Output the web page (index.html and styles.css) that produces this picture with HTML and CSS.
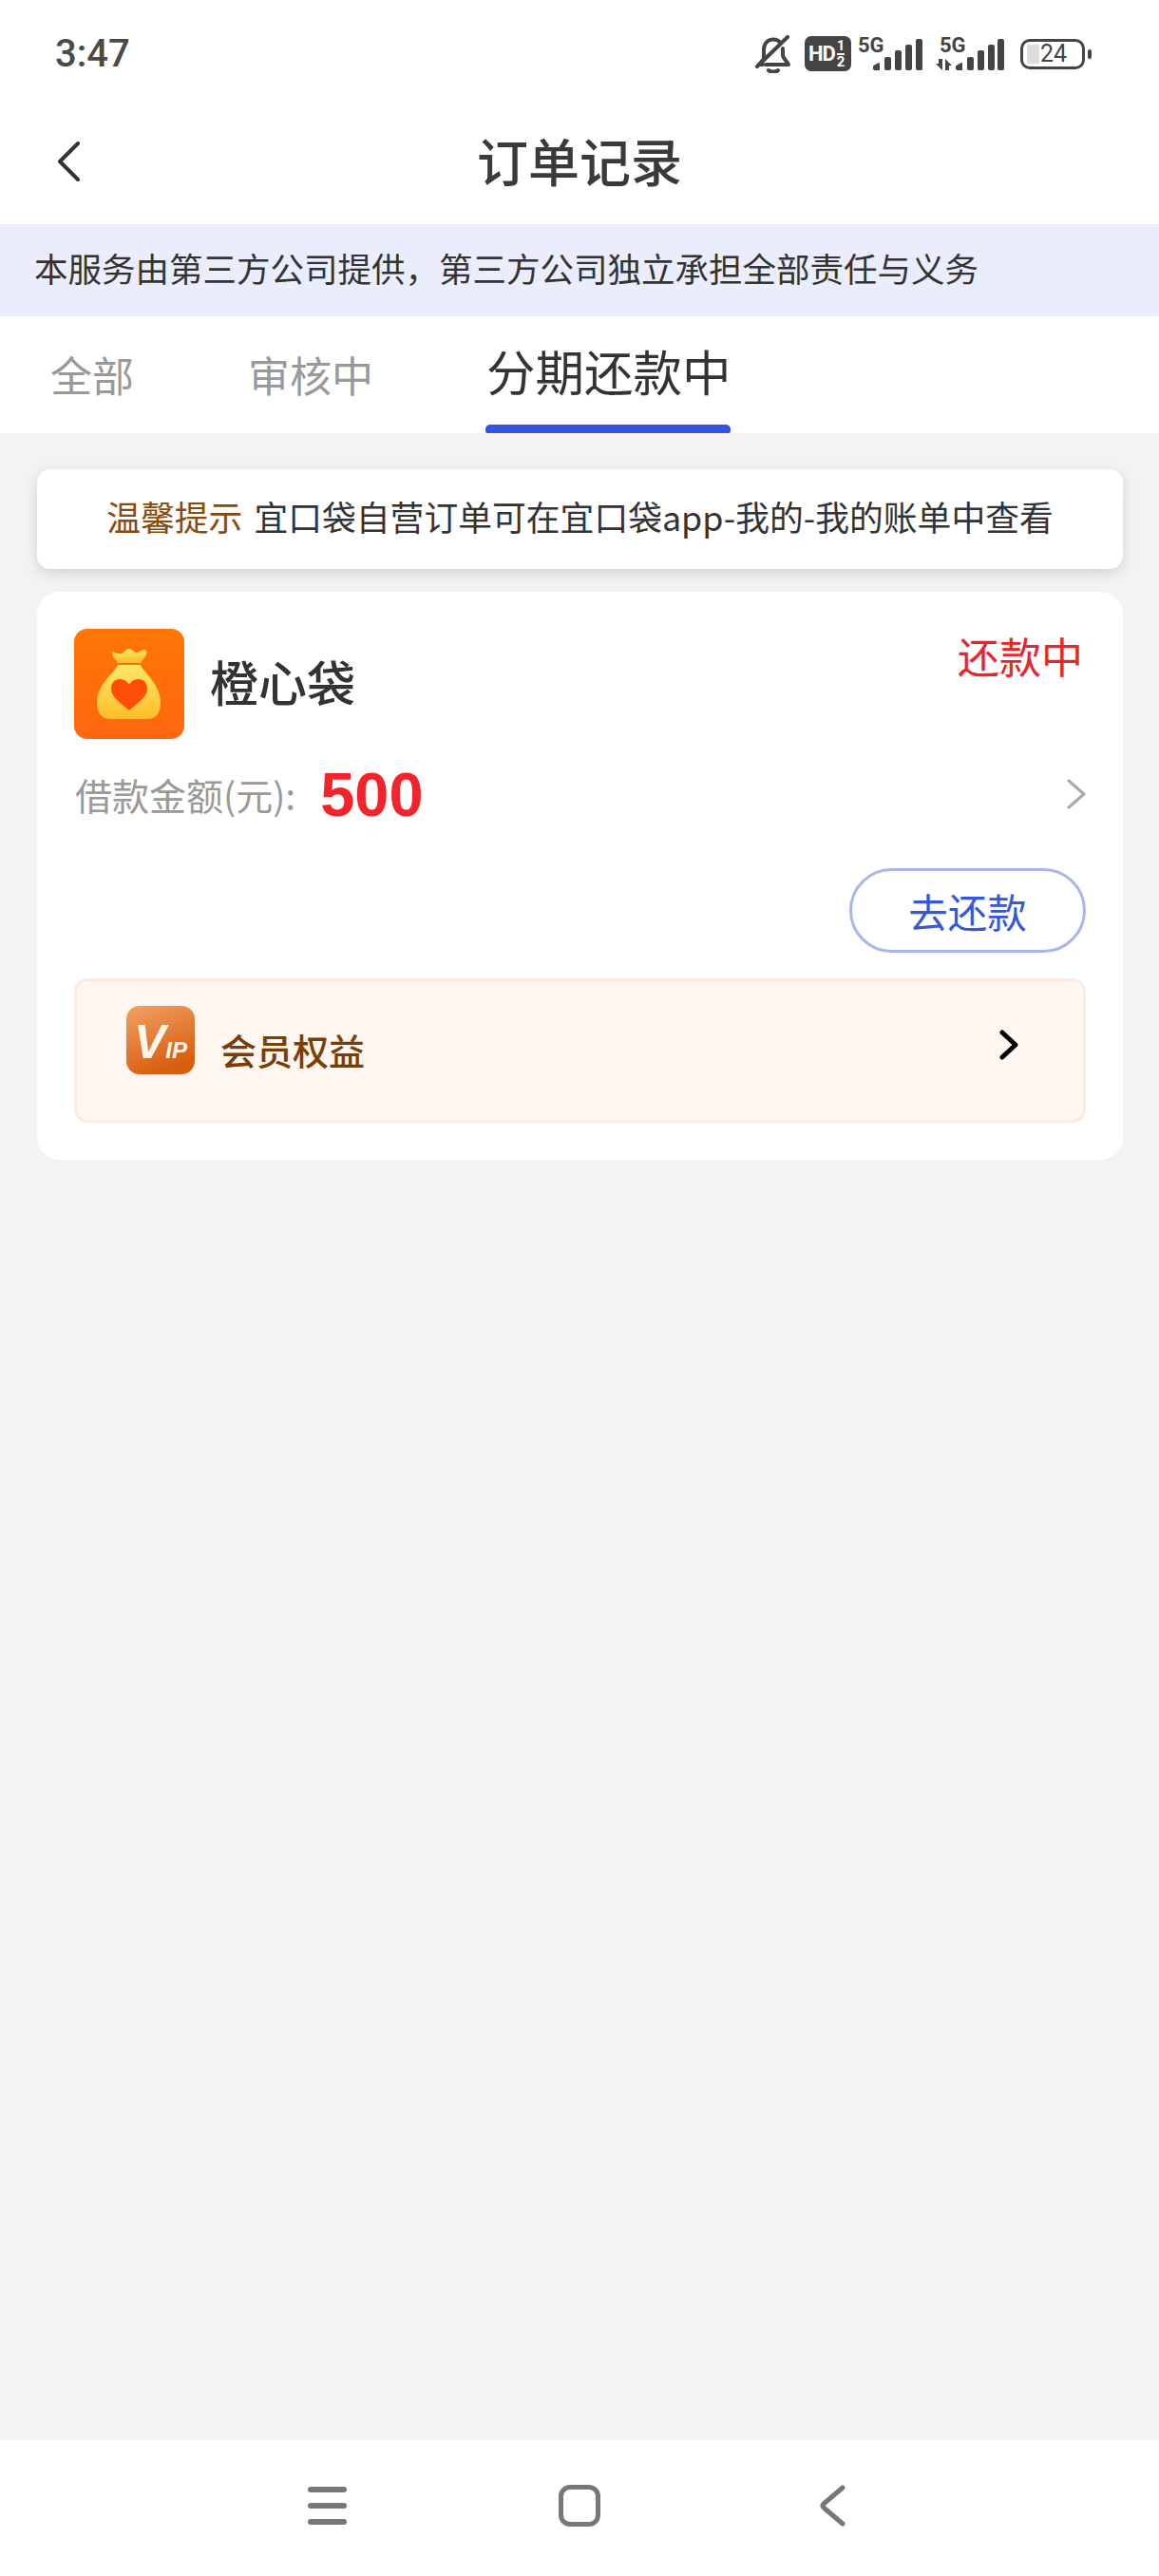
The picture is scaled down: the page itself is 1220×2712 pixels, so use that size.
FILE: index.html
```html
<!DOCTYPE html>
<html>
<head>
  <meta charset="utf-8">
  <title>订单记录</title>
  <link rel="stylesheet" href="styles.css">
</head>
<body>
  <div class="screen">
    <div class="status-bar">
      <span class="clock">3:47</span>
      <div class="status-icons">
        <svg class="bell" width="38" height="40" viewBox="0 0 38 40" fill="none" stroke="#444" stroke-width="4" stroke-linecap="round" stroke-linejoin="round">
          <path d="M9 25V15C9 9 13 4.500 19 4.500C22 4.500 24.500 5.500 26 7.500"/>
          <path d="M29 14V21C29 24 33 27 35 31H11"/>
          <path d="M9 25L4 31H8"/>
          <path d="M2 33L34 2"/>
          <path d="M14 37C16 39 22 39 24 37"/>
        </svg>
        <div class="hd">
          <span class="hd-text">HD</span>
          <span class="hd-frac"><span>1</span><span class="hd-line"></span><span>2</span></span>
        </div>
        <div class="signal">
          <span class="net">5G</span>
          <svg width="52" height="33" viewBox="0 0 52 33" fill="#444">
            <path d="M0 29C0 28 5 25 7 25V33H2C1 33 0 32 0 31Z"/>
            <rect x="12" y="19" width="7" height="14" rx="2"/>
            <rect x="23" y="12" width="7" height="21" rx="2"/>
            <rect x="34" y="6" width="7" height="27" rx="2"/>
            <rect x="45" y="0" width="7" height="33" rx="2"/>
          </svg>
        </div>
        <div class="signal signal-data">
          <span class="net">5G</span>
          <svg width="72" height="33" viewBox="0 0 72 33" fill="#444">
            <path d="M3 21H7V33L0 26H3ZM10 21L17 28H14V33H10Z"/>
            <path d="M21 29C21 28 26 25 28 25V33H23C22 33 21 32 21 31Z"/>
            <rect x="33" y="19" width="7" height="14" rx="2"/>
            <rect x="44" y="12" width="7" height="21" rx="2"/>
            <rect x="55" y="6" width="7" height="27" rx="2"/>
            <rect x="65" y="0" width="7" height="33" rx="2"/>
          </svg>
        </div>
        <div class="battery">
          <div class="battery-body">
            <span class="battery-fill"></span>
            <span class="battery-num">24</span>
          </div>
          <span class="battery-nub"></span>
        </div>
      </div>
    </div>

    <div class="nav-bar">
      <svg class="nav-back" width="24" height="42" viewBox="0 0 24 42" fill="none" stroke="#333" stroke-width="4" stroke-linecap="round" stroke-linejoin="round">
        <path d="M22 2L3 21L22 40"/>
      </svg>
      <h1>订单记录</h1>
    </div>

    <div class="notice">本服务由第三方公司提供，第三方公司独立承担全部责任与义务</div>

    <div class="tabs">
      <div class="tab">全部</div>
      <div class="tab">审核中</div>
      <div class="tab active">分期还款中</div>
    </div>

    <div class="content">
      <div class="tip">
        <span class="tip-label">温馨提示</span>
        <span>宜口袋自营订单可在宜口袋app-我的-我的账单中查看</span>
      </div>

      <div class="order-card">
        <div class="order-head">
          <div class="brand">
            <svg class="brand-logo" width="116" height="116" viewBox="0 0 116 116">
              <defs>
                <linearGradient id="logoBg" x1="0" y1="0" x2="0" y2="1">
                  <stop offset="0" stop-color="#ff7606"/>
                  <stop offset="1" stop-color="#ff6610"/>
                </linearGradient>
                <linearGradient id="sack" x1="0" y1="0" x2="0" y2="1">
                  <stop offset="0" stop-color="#ffe765"/>
                  <stop offset="1" stop-color="#fdbd2a"/>
                </linearGradient>
              </defs>
              <rect width="116" height="116" rx="14" fill="url(#logoBg)"/>
              <path d="M40 24C44 25 47 27 50 26C53 25 54 21 58 21C61 21 63 25 66 25C69 25 71 22 74 22C77 22 77 26 75 29C73 32 71 34 70 36H46C45 33 39 29 40 24Z" fill="url(#sack)"/>
              <path d="M46 38H70C74 47 91 58 91 78C91 89 86 95 76 95H39C29 95 24 89 24 78C24 58 42 47 46 38Z" fill="url(#sack)"/>
              <path d="M58 86C50 79 39 72 39 63C39 57 43 53 48 53C52 53 56 55 58 59C60 55 64 53 68 53C73 53 77 57 77 63C77 72 66 79 58 86Z" fill="#ff4e06"/>
            </svg>
            <span class="brand-name">橙心袋</span>
          </div>
          <span class="order-status">还款中</span>
        </div>

        <div class="amount-row">
          <span class="amount-label">借款金额(元):</span>
          <span class="amount-value">500</span>
          <svg class="amount-arrow" width="20" height="32" viewBox="0 0 20 32" fill="none" stroke="#aaa" stroke-width="3" stroke-linecap="round" stroke-linejoin="round">
            <path d="M2 2L18 16L2 30"/>
          </svg>
        </div>

        <div class="action-row">
          <button class="repay-btn">去还款</button>
        </div>

        <div class="vip-bar">
          <svg class="vip-icon" width="72" height="72" viewBox="0 0 72 72">
            <defs>
              <linearGradient id="vipBg" x1="0" y1="0" x2="0.4" y2="1">
                <stop offset="0" stop-color="#f2a164"/>
                <stop offset="1" stop-color="#d85e10"/>
              </linearGradient>
            </defs>
            <rect width="72" height="72" rx="14" fill="url(#vipBg)"/>
            <text x="8" y="55" class="vip-logo"><tspan class="vip-v">V</tspan><tspan class="vip-ip">IP</tspan></text>
          </svg>
          <span class="vip-text">会员权益</span>
          <svg class="vip-arrow" width="20" height="32" viewBox="0 0 20 32" fill="none" stroke="#000" stroke-width="5" stroke-linecap="round" stroke-linejoin="round">
            <path d="M3 3L17 16L3 29"/>
          </svg>
        </div>
      </div>
    </div>

    <div class="bottom-nav">
      <div class="menu-icon"><span></span><span></span><span></span></div>
      <div class="home-icon"></div>
      <svg class="back-icon" width="28" height="44" viewBox="0 0 28 44" fill="none" stroke="#777" stroke-width="5" stroke-linecap="round" stroke-linejoin="round">
        <path d="M25 3L5 20C3.500 21 3.500 23 5 24L25 41"/>
      </svg>
    </div>
  </div>
</body>
</html>
```

FILE: styles.css
```css
* {
  box-sizing: border-box;
}

body {
  margin: 0;
  background-color: #fff;
  font-family: "Noto Sans CJK SC", "Noto Sans", sans-serif;
  color: #333;
}

.screen {
  width: 1220px;
  height: 2712px;
  display: flex;
  flex-direction: column;
}

/* status bar */
.status-bar {
  height: 106px;
  padding: 34px 71px 0 58px;
  display: flex;
  justify-content: space-between;
  align-items: flex-start;
}

.clock {
  font-family: Roboto, sans-serif;
  font-size: 40px;
  font-weight: 500;
  line-height: 46px;
  color: #4a4a4a;
}

.status-icons {
  display: flex;
  align-items: flex-start;
  margin-top: 3px;
}

.bell {
  display: block;
}

.hd {
  width: 49px;
  height: 37px;
  margin: 1px 0 0 14px;
  padding-left: 4px;
  background-color: #444;
  border-radius: 7px;
  display: flex;
  align-items: center;
  color: #fff;
  font-family: Roboto, sans-serif;
  font-weight: 700;
}

.hd-text {
  font-size: 22px;
  letter-spacing: -1px;
}

.hd-frac {
  margin-left: 2px;
  display: flex;
  flex-direction: column;
  font-size: 15px;
  line-height: 15px;
  text-align: center;
}

.hd-line {
  height: 2px;
  background-color: #fff;
}

.signal {
  width: 68px;
  height: 40px;
  margin-left: 7px;
  position: relative;
}

.signal svg {
  position: absolute;
  right: 0;
  top: 4px;
}

.net {
  position: absolute;
  left: 0;
  top: 1px;
  font-family: Roboto, sans-serif;
  font-weight: 700;
  font-size: 22px;
  line-height: 20px;
  color: #444;
}

.signal-data {
  width: 72px;
  margin-left: 14px;
}

.signal-data .net {
  left: 4px;
}

.battery {
  margin: 4px 0 0 17px;
  display: flex;
  align-items: center;
}

.battery-body {
  width: 68px;
  height: 32px;
  padding: 4px;
  border: 3px solid #444;
  border-radius: 10px;
  display: flex;
  align-items: center;
}

.battery-fill {
  width: 13px;
  height: 20px;
  background-color: #ddd;
}

.battery-num {
  margin-left: 1px;
  font-family: Roboto, sans-serif;
  font-size: 25px;
  line-height: 24px;
  color: #444;
}

.battery-nub {
  width: 4px;
  height: 10px;
  margin-left: 3px;
  background-color: #444;
  border-radius: 2px;
}

/* title bar */
.nav-bar {
  height: 130px;
  padding-left: 60px;
  position: relative;
  display: flex;
  align-items: center;
}

.nav-back {
  margin-bottom: 2px;
}

.nav-bar h1 {
  position: absolute;
  left: 0;
  right: 0;
  margin: -5px 0 0;
  text-align: center;
  font-size: 54px;
  font-weight: 500;
  line-height: 54px;
  color: #3a3a3a;
}

.notice {
  height: 97px;
  padding-left: 36px;
  background-color: #e9edfc;
  font-size: 35.500px;
  line-height: 92px;
  color: #333;
}

/* tabs */
.tabs {
  height: 123px;
  padding-left: 53px;
  display: flex;
  gap: 120px;
  background-color: #fff;
}

.tab {
  font-size: 44px;
  line-height: 122px;
  color: #999;
}

.tab.active {
  margin-left: -1px;
  position: relative;
  font-size: 51.500px;
  line-height: 114px;
  color: #333;
}

.tab.active::after {
  content: "";
  position: absolute;
  left: -1px;
  right: 1px;
  bottom: 0;
  height: 9px;
  background-color: #3353e0;
  border-radius: 5px 5px 2px 2px;
}

.content {
  flex: 1;
  padding: 38px 38px 0 39px;
  background-color: #f3f3f3;
}

.tip {
  height: 105px;
  padding-bottom: 7px;
  background-color: #fff;
  border-radius: 14px;
  box-shadow: 0 4px 14px rgba(0, 0, 0, 0.14);
  display: flex;
  justify-content: center;
  align-items: center;
  gap: 12px;
  font-size: 35.800px;
  color: #333;
}

.tip-label {
  color: #8a4a0b;
}

/* order card */
.order-card {
  height: 598px;
  margin-top: 24px;
  padding: 39px 39px 0 39px;
  background-color: #fff;
  border-radius: 24px;
}

.order-head {
  display: flex;
  justify-content: space-between;
  align-items: flex-start;
}

.brand {
  display: flex;
  align-items: center;
  gap: 27px;
}

.brand-logo {
  display: block;
}

.brand-name {
  margin-bottom: 6px;
  font-size: 51px;
  font-weight: 500;
  line-height: 60px;
  color: #333;
}

.order-status {
  margin: -2px 3px 0 0;
  font-size: 44px;
  line-height: 60px;
  color: #e8262a;
}

.amount-row {
  height: 56px;
  margin-top: 30px;
  padding-left: 1px;
  display: flex;
  align-items: center;
}

.amount-label {
  font-size: 39px;
  color: #999;
}

.amount-value {
  margin-left: 26px;
  font-family: "Liberation Sans", sans-serif;
  font-size: 65px;
  font-weight: 700;
  color: #f0242c;
}

.amount-arrow {
  margin-left: auto;
}

.action-row {
  margin-top: 50px;
  display: flex;
  justify-content: flex-end;
}

.repay-btn {
  width: 249px;
  height: 89px;
  padding: 0;
  background-color: #fff;
  border: 3px solid #a9b6ea;
  border-radius: 45px;
  font-family: inherit;
  font-size: 41.500px;
  color: #3a55d8;
}

.vip-bar {
  height: 152px;
  margin-top: 27px;
  padding: 26px 68px 0 52px;
  background-color: #fdf6f1;
  border: 3px solid #fbebe0;
  border-radius: 14px;
  display: flex;
  align-items: flex-start;
}

.vip-icon {
  display: block;
}

.vip-text {
  margin: 24px 0 0 27px;
  font-size: 38px;
  font-weight: 500;
  line-height: 44px;
  color: #7a3e05;
}

.vip-arrow {
  margin: 25px 0 0 auto;
}

.vip-logo {
  font-family: "Liberation Sans", sans-serif;
  font-weight: 700;
  font-style: italic;
  fill: #fff6ee;
}

.vip-v {
  font-size: 50px;
}

.vip-ip {
  font-size: 24px;
}

/* bottom nav */
.bottom-nav {
  height: 143px;
  padding: 44px 0 0 324px;
  background-color: #fff;
  display: flex;
  align-items: flex-start;
}

.menu-icon {
  width: 41px;
  margin-top: 5px;
  display: flex;
  flex-direction: column;
  gap: 11px;
}

.menu-icon span {
  height: 6px;
  background-color: #777;
  border-radius: 3px;
}

.home-icon {
  width: 44px;
  height: 44px;
  margin: 3px 0 0 223px;
  border: 5px solid #777;
  border-radius: 12px;
}

.back-icon {
  margin: 3px 0 0 230px;
}
```
